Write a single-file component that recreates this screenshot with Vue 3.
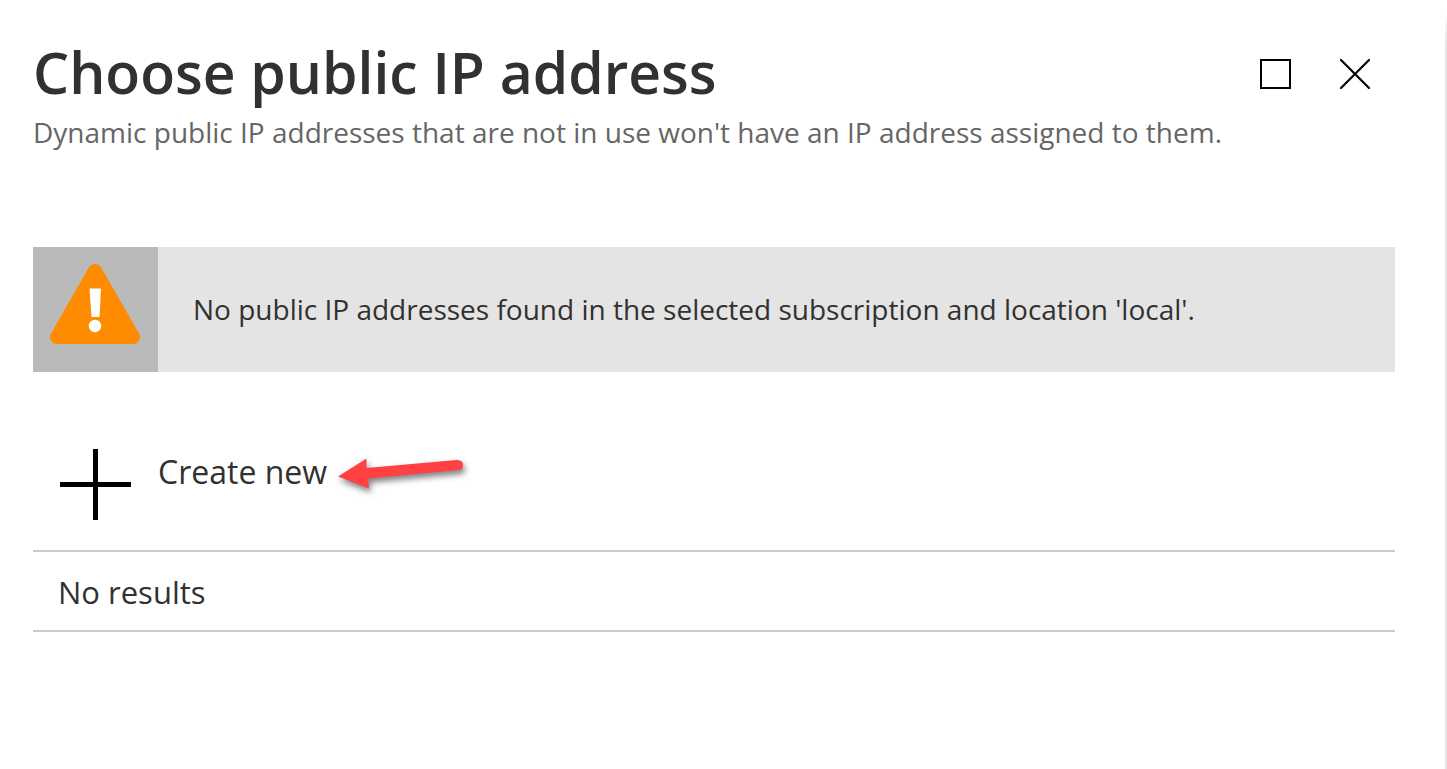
<script setup>
const title = 'Choose public IP address'
const subtitle = "Dynamic public IP addresses that are not in use won't have an IP address assigned to them."
const notice = "No public IP addresses found in the selected subscription and location 'local'."
</script>

<template>
  <main class="blade">
    <header class="header">
      <div class="heading">
        <h1>{{ title }}</h1>
        <p>{{ subtitle }}</p>
      </div>
      <div class="controls">
        <button type="button" aria-label="Maximize">
          <svg viewBox="0 0 32 32" width="32" height="32"><rect x="2" y="2" width="29" height="28" fill="none" stroke="#000" stroke-width="2" /></svg>
        </button>
        <button type="button" aria-label="Close">
          <svg viewBox="0 0 32 32" width="32" height="32"><path d="M2 2 30 30M30 2 2 30" fill="none" stroke="#000" stroke-width="2.2" stroke-linecap="round" /></svg>
        </button>
      </div>
    </header>

    <section class="notice" role="status">
      <div class="notice-icon">
        <svg viewBox="0 0 90 80" width="90" height="80">
          <path d="M38.5 4Q41 0 45 0T51.500 4L89 69.500Q91 73 89 76.500T83 80H7Q3 80 1 76.500T1 69.500Z" fill="#ff8c00" />
          <path d="M39.500 24.500H51L49.500 53H41.500Z" fill="#fff" />
          <circle cx="45" cy="62" r="6.200" fill="#fff" />
        </svg>
      </div>
      <p>{{ notice }}</p>
    </section>

    <button type="button" class="create">
      <svg class="plus" viewBox="0 0 72 72" width="72" height="72"><path d="M36.500 1V72M1 36.500H72" stroke="#000" stroke-width="5" /></svg>
      <span class="create-label">
        Create new
        <svg class="arrow" viewBox="0 0 140 50" width="140" height="50">
          <path d="M11 26.500 39.500 8.500V18L129.500 10Q136 10 136 15T131.500 20L41 28.500 42 38.500Z" fill="#ff4144" />
        </svg>
      </span>
    </button>

    <div class="results">No results</div>
  </main>
</template>

<style>
body {
  margin: 0;
  background: #fff;
}
</style>

<style scoped>
.blade {
  position: relative;
  box-sizing: border-box;
  min-height: 100vh;
  padding: 32px 52px 40px 33px;
  color: #323130;
  font-family: "Segoe UI", "Open Sans", "Noto Sans", sans-serif;
}
.blade::after {
  content: "";
  position: absolute;
  top: 12px;
  right: 0;
  bottom: 0;
  width: 2px;
  background: linear-gradient(#fff, #e6e6e6 32px);
}
h1,
p {
  margin: 0;
}
.header {
  display: flex;
  justify-content: space-between;
}
.heading {
  flex: 1;
  min-width: 0;
}
h1 {
  font-size: 57px;
  font-weight: 600;
  line-height: 80px;
}
.heading p {
  color: #666;
  font-size: 28px;
  line-height: 40px;
}
.controls {
  display: flex;
  align-items: flex-start;
  gap: 48px;
  padding: 26px 24px 0 0;
}
button {
  border: 0;
  padding: 0;
  background: none;
  color: inherit;
  font-family: inherit;
  cursor: pointer;
}
svg {
  display: block;
}
.notice {
  display: flex;
  margin-top: 95px;
  background: #e4e4e4;
  font-size: 28px;
  line-height: 40px;
}
.notice-icon {
  flex: none;
  padding: 17px 18px 28px 17px;
  background: #bababa;
}
.notice p {
  align-self: center;
  padding: 0 0 2px 35px;
}
.create {
  display: flex;
  align-items: flex-start;
  gap: 27px;
  width: 100%;
  margin-top: 76px;
  padding: 0 0 30px 26px;
  border-bottom: 2px solid #ccc;
  font-size: 32px;
  line-height: 48px;
  text-align: left;
}
.create-label {
  position: relative;
}
.arrow {
  position: absolute;
  top: 2px;
  left: 100%;
  filter: drop-shadow(2px 4px 3px rgba(0, 0, 0, 0.5));
}
.results {
  padding: 17px 25px 15px;
  border-bottom: 2px solid #ccc;
  font-size: 31px;
  line-height: 46px;
}
</style>
